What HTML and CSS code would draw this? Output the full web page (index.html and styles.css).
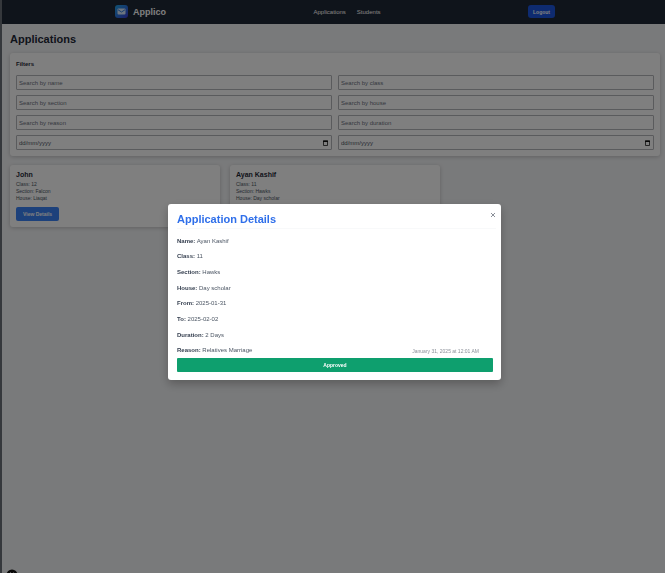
FILE: index.html
```html
<!DOCTYPE html>
<html lang="en">
<head>
<meta charset="utf-8">
<meta name="viewport" content="width=device-width, initial-scale=1">
<title>Applico</title>
<link rel="stylesheet" href="styles.css">
</head>
<body>
<header class="topbar">
  <div class="topbar-inner">
    <a class="brand" href="#">
      <svg class="brand-icon" viewBox="0 0 26 26" aria-hidden="true">
        <defs><linearGradient id="g" x1="0" y1="0" x2="1" y2="1"><stop offset="0" stop-color="#22a5e8"/><stop offset=".5" stop-color="#2b78e4"/><stop offset="1" stop-color="#3d3ad0"/></linearGradient></defs>
        <rect width="26" height="26" rx="6" fill="url(#g)"/>
        <rect x="5" y="7" width="16" height="12" rx="2" fill="#dbeafe"/>
        <path d="M6 9.500l7 4.500 7-4.500" fill="none" stroke="#2f7fe0" stroke-width="2"/>
      </svg>
      <span>Applico</span>
    </a>
    <nav class="nav">
      <a href="#">Applications</a>
      <a href="#">Students</a>
    </nav>
    <button class="logout" type="button">Logout</button>
  </div>
</header>
<main class="page">
  <h1>Applications</h1>
  <section class="filters">
    <h2>Filters</h2>
    <form class="filter-grid">
      <input type="text" placeholder="Search by name" aria-label="Name">
      <input type="text" placeholder="Search by class" aria-label="Class">
      <input type="text" placeholder="Search by section" aria-label="Section">
      <input type="text" placeholder="Search by house" aria-label="House">
      <input type="text" placeholder="Search by reason" aria-label="Reason">
      <input type="text" placeholder="Search by duration" aria-label="Duration">
      <div class="date-field">
        <input type="text" placeholder="dd/mm/yyyy" aria-label="From date">
        <svg viewBox="0 0 10 12" aria-hidden="true"><path d="M1 2h8v9H1z" fill="none" stroke="#111" stroke-width="1.500"/><path d="M0 1h10v3H0z" fill="#111"/></svg>
      </div>
      <div class="date-field">
        <input type="text" placeholder="dd/mm/yyyy" aria-label="To date">
        <svg viewBox="0 0 10 12" aria-hidden="true"><path d="M1 2h8v9H1z" fill="none" stroke="#111" stroke-width="1.500"/><path d="M0 1h10v3H0z" fill="#111"/></svg>
      </div>
    </form>
  </section>
  <section class="cards">
    <article class="card">
      <h3>John</h3>
      <p>Class: 12</p>
      <p>Section: Falcon</p>
      <p>House: Liaqat</p>
      <button type="button">View Details</button>
    </article>
    <article class="card">
      <h3>Ayan Kashif</h3>
      <p>Class: 11</p>
      <p>Section: Hawks</p>
      <p>House: Day scholar</p>
    </article>
  </section>
</main>
<svg class="dev-badge" viewBox="0 0 12 12" aria-hidden="true"><circle cx="6" cy="6" r="5.500" fill="#111"/><path d="M4.500 8V3.500l3 4.500V3.500" fill="none" stroke="#ddd"/></svg>
<div class="overlay">
  <div class="modal" role="dialog" aria-modal="true" aria-labelledby="modal-title">
    <div class="modal-head">
      <h2 id="modal-title">Application Details</h2>
      <button class="close" type="button" aria-label="Close"><svg viewBox="0 0 6 6"><path d="M1 1l4 4M5 1L1 5"/></svg></button>
    </div>
    <div class="details">
      <p><strong>Name:</strong> Ayan Kashif</p>
      <p><strong>Class:</strong> 11</p>
      <p><strong>Section:</strong> Hawks</p>
      <p><strong>House:</strong> Day scholar</p>
      <p><strong>From:</strong> 2025-01-31</p>
      <p><strong>To:</strong> 2025-02-02</p>
      <p><strong>Duration:</strong> 2 Days</p>
      <div class="last-row">
        <p><strong>Reason:</strong> Relatives Marriage</p>
        <time>January 31, 2025 at 12:01 AM</time>
      </div>
    </div>
    <button class="approved" type="button">Approved</button>
  </div>
</div>
</body>
</html>
```
FILE: styles.css
```css
* { box-sizing: border-box; margin: 0; }
html { background: #f3f4f6; }
body {
  min-height: 100vh;
  border-left: 2px solid #6b7078;
  background: #f3f4f6;
  color: #1f2937;
  font: 6px/8px "Liberation Sans", Arial, sans-serif;
  overflow: hidden;
}
button, input { font: inherit; }
button { border: 0; cursor: pointer; }
a { color: inherit; text-decoration: none; }

.topbar { height: 24px; padding-left: 3px; background: #1f2937; color: #fff; }
.topbar-inner {
  width: calc(100% * 2 / 3);
  height: 23px;
  margin: 0 auto;
  display: flex;
  align-items: center;
  justify-content: space-between;
}
.brand { display: flex; align-items: center; gap: 5px; font-size: 9px; font-weight: bold; }
.brand-icon { width: 13px; height: 13px; }
.nav { display: flex; gap: 11px; color: #fff; }
.logout {
  height: 13px;
  padding: 0 5px;
  border-radius: 3px;
  background: #1d56e0;
  color: #fff;
  font-size: 5px;
  font-weight: bold;
}

.page { padding: 9px 5px 10px 8px; }
h1 { margin-bottom: 8px; font-size: 11px; line-height: 12px; }
.filters, .card {
  border-radius: 3px;
  background: #fff;
  box-shadow: 0 1px 4px rgba(0, 0, 0, .2);
}
.filters { padding: 6px; }
.filters h2 { margin-bottom: 6px; font-size: 6px; line-height: 10px; }
.filter-grid { display: grid; grid-template-columns: 1fr 1fr; gap: 5px 6px; }
.filter-grid input {
  display: block;
  width: 100%;
  height: 15px;
  padding: 0 2px;
  border: 1px solid #b4b6ba;
  border-radius: 1px;
  background: #fff;
  color: #374151;
}
.filter-grid input::placeholder { color: #6b7280; opacity: 1; }
.date-field { position: relative; }
.date-field input::placeholder { color: #4b5563; }
.date-field svg { position: absolute; top: 5px; right: 4px; width: 5px; height: 6px; }

.cards { display: grid; grid-template-columns: repeat(3, 1fr); gap: 10px; margin-top: 9px; }
.card { padding: 6px; font-size: 5px; line-height: 7px; color: #4b5563; }
.card h3 { color: #1f2937; font-size: 7px; line-height: 8px; margin-bottom: 2px; }
.card button {
  height: 14px;
  margin-top: 5px;
  padding: 0 7px;
  border-radius: 2px;
  background: #3b82f6;
  color: #fff;
  font-size: 5px;
  font-weight: bold;
}
.dev-badge { position: fixed; left: 6px; bottom: -8px; width: 12px; height: 12px; }

.overlay {
  position: fixed;
  inset: 0;
  display: flex;
  align-items: center;
  justify-content: center;
  padding: 11px 0 0 4px;
  background: rgba(0, 0, 0, .5);
}
.modal {
  width: 50%;
  min-width: 333px;
  padding: 8px 8px 8px 9px;
  border-radius: 3px;
  background: #fff;
  color: #4b5563;
  box-shadow: 0 4px 10px rgba(0, 0, 0, .25);
}
.modal-head {
  display: flex;
  justify-content: space-between;
  height: 17px;
  margin-right: -3px;
  border-bottom: 1px solid #f8f9fa;
}
.modal-head h2 { color: #2f6fea; font-size: 11px; line-height: 14px; }
.close { width: 6px; height: 6px; padding: 0; background: none; }
.close svg { display: block; width: 6px; height: 6px; stroke: #8b9099; fill: none; }
.details { display: grid; grid-template-rows: repeat(8, 1fr); height: 125px; margin-top: 4px; align-items: center; }
.details strong { color: #374151; }
.last-row { display: flex; justify-content: space-between; align-items: flex-end; padding-right: 14px; }
.last-row time { color: #8b9099; font-size: 5px; line-height: 6px; }
.approved {
  display: block;
  width: 100%;
  height: 14px;
  border-radius: 1px;
  background: #0e9f6e;
  color: #fff;
  font-size: 5px;
  font-weight: bold;
}
```
